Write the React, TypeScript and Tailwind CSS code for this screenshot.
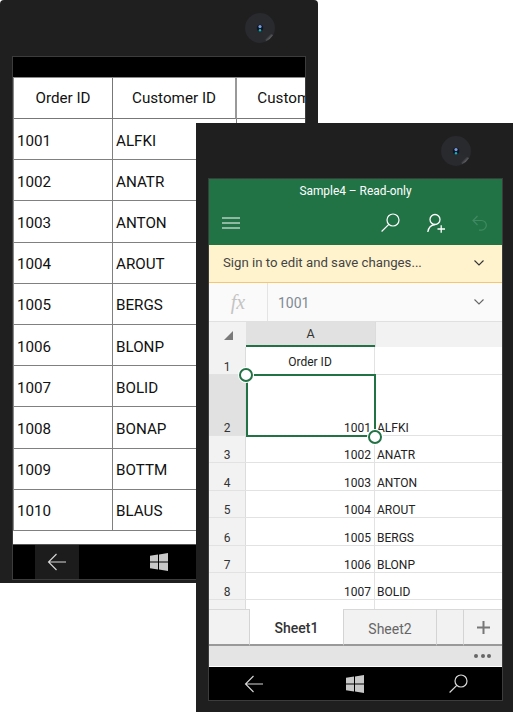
const FONT = "font-['Roboto','Noto_Sans',sans-serif]";

function Camera() {
  return (
    <svg width="30" height="30" viewBox="0 0 30 30" className="absolute left-[245px] top-[13px]">
      <defs>
        <linearGradient id="cam" x1="0.5" y1="0.5" x2="0.9" y2="0.9">
          <stop offset="0.3" stopColor="#2a2b2f" />
          <stop offset="1" stopColor="#8a8a8c" />
        </linearGradient>
      </defs>
      <circle cx="15" cy="15" r="15" fill="#292a2e" />
      <path d="M15 15 L28 22 A15 15 0 0 1 21 28 Z" fill="url(#cam)" />
      <circle cx="15" cy="15" r="3.2" fill="#0d1526" />
      <circle cx="15" cy="13.6" r="1.6" fill="#7a9bdc" />
      <circle cx="15" cy="17.2" r="1.2" fill="#14b0b8" />
    </svg>
  );
}

function BackIcon() {
  return (
    <svg width="20" height="18" viewBox="0 0 20 18" fill="none" stroke="#d8d8d8" strokeWidth="1.1">
      <path d="M19 9H1.5M9.5 1L1.5 9l8 8" />
    </svg>
  );
}

function WinIcon() {
  return (
    <svg width="18" height="18" viewBox="0 0 18 18" fill="#c8c8c8">
      <path d="M0 2.8L8 1.6V8.4H0ZM9 1.4L18 0V8.4H9ZM0 9.6H8V16.4L0 15.2ZM9 9.6H18V18L9 16.6Z" />
    </svg>
  );
}

function SearchIcon({ color = "#d8d8d8" }: { color?: string }) {
  return (
    <svg width="19" height="19" viewBox="0 0 19 19" fill="none" stroke={color} strokeWidth="1.2">
      <circle cx="12" cy="7" r="6" />
      <path d="M7.8 11.3L0.6 18.5" />
    </svg>
  );
}

function Chevron({ color }: { color: string }) {
  return (
    <svg width="10" height="6" viewBox="0 0 10 6" fill="none" stroke={color} strokeWidth="1.1">
      <path d="M0.5 0.5L5 5L9.5 0.5" />
    </svg>
  );
}

const orders = [
  ["1001", "ALFKI"],
  ["1002", "ANATR"],
  ["1003", "ANTON"],
  ["1004", "AROUT"],
  ["1005", "BERGS"],
  ["1006", "BLONP"],
  ["1007", "BOLID"],
  ["1008", "BONAP"],
  ["1009", "BOTTM"],
  ["1010", "BLAUS"],
];

function BackPhone() {
  return (
    <div className="absolute left-0 top-0 h-[583px] w-[318px] rounded-t-[4px] bg-[#1f1f1f] pl-3 pt-[56px]">
      <Camera />
      <div className="flex h-[524px] w-[294px] flex-col border border-[#3c3c3c] bg-white">
        <div className="h-5 shrink-0 bg-black" />
        <div className="flex-1 overflow-hidden bg-white">
          <div className="grid w-[372px] grid-cols-[99px_124px_149px] border-t border-l border-[#8a8a8a] text-[15.2px] text-[#111]">
            <div className="flex h-[41px] items-center justify-center border-r border-b border-[#777]">Order ID</div>
            <div className="flex h-[41px] items-center justify-center border-r-2 border-b border-r-[#999] border-b-[#777]">Customer ID</div>
            <div className="flex h-[41px] items-center justify-center border-b border-[#777] pl-[2px]">Customer Name</div>
            {orders.map(([id, cust]) => (
              <div key={id} className="contents">
                <div className="flex h-[41.2px] items-center border-r border-b border-[#808080] pt-[4px] pl-[3px]">{id}</div>
                <div className="flex h-[41.2px] items-center border-r border-b border-[#808080] pt-[4px] pl-[3px]">{cust}</div>
                <div className="h-[41.2px] border-b border-[#808080]" />
              </div>
            ))}
          </div>
        </div>
        <div className="flex h-[35px] shrink-0 border-t border-[#555] bg-black">
          <div className="ml-[22px] flex w-[44px] items-center justify-center bg-[#1c1c1c]">
            <BackIcon />
          </div>
          <div className="ml-[71px] flex items-center">
            <WinIcon />
          </div>
        </div>
      </div>
    </div>
  );
}

const rows = [
  { n: 3, id: "1002", c: "ANATR" },
  { n: 4, id: "1003", c: "ANTON" },
  { n: 5, id: "1004", c: "AROUT" },
  { n: 6, id: "1005", c: "BERGS" },
  { n: 7, id: "1006", c: "BLONP" },
  { n: 8, id: "1007", c: "BOLID" },
];

function SheetRow({ n, id, c, highlight, h }: { n: string | number; id?: string; c?: string; highlight?: boolean; h: string }) {
  return (
    <div className={`flex ${h} border-b border-[#e2e2e2] text-[12px] leading-[14px] text-[#222]`}>
      <div className={`flex w-[37px] items-end justify-center border-r border-[#dcdcdc] text-[#333] ${highlight ? "bg-[#e1e1e1]" : "bg-[#f2f2f2]"}`}>{n}</div>
      <div className="flex w-[129px] items-end justify-end border-r border-[#e2e2e2] pr-[3px]">{id}</div>
      <div className="flex flex-1 items-end pl-[2px]">{c}</div>
    </div>
  );
}

function FrontPhone() {
  return (
    <div className="absolute left-[196px] top-[123px] h-[589px] w-[317px] bg-[#1f1f1f] pl-3 pt-[55px]">
      <Camera />
      <div className="flex h-[523px] w-[295px] flex-col border border-[#3c3c3c] bg-white">
        <div className="h-[66px] shrink-0 bg-[#217346] text-white">
          <div className="pt-[2px] text-center text-[11.9px] leading-5">Sample4 – Read-only</div>
          <div className="flex h-[40px] items-center pl-[13px] pr-[15px] pt-[3px]">
            <svg width="18" height="12" viewBox="0 0 18 12" stroke="#fff" strokeWidth="1">
              <path d="M0 1h18M0 6h18M0 11h18" />
            </svg>
            <div className="ml-auto mr-[27px] flex">
              <SearchIcon color="#ffffff" />
            </div>
            <svg width="18" height="20" viewBox="0 0 18 20" fill="none" stroke="#fff" strokeWidth="1.3" className="mr-[27px]">
              <circle cx="8" cy="6.5" r="5" />
              <path d="M0.8 19C1.5 14.5 4 12 8 11.5M10.5 16h7.5M14.2 12.2v7.6" />
            </svg>
            <svg width="15" height="16" viewBox="0 0 15 16" fill="none" stroke="#3f8a61" strokeWidth="1.2">
              <path d="M5.5 1L1 5.5l4.5 4.5M1 5.5h8.5a4.8 4.8 0 0 1 0 9.6H7" />
            </svg>
          </div>
        </div>
        <div className="flex h-[38px] shrink-0 items-center border-b border-[#f6c56f] bg-[#fff3cd] pr-[18px] pb-[1px] pl-[14px] text-[13.2px] text-[#444]">
          <span>Sign in to edit and save changes...</span>
          <span className="ml-auto flex">
            <Chevron color="#333" />
          </span>
        </div>
        <div className="flex h-[39px] shrink-0 border-b border-[#e0e0e0] bg-[#fafafa]">
          <div className="flex w-[59px] items-center justify-center border-r border-[#e4e4e4] font-['Liberation_Serif',serif] text-[20px] text-[#c4c4c4] italic">fx</div>
          <div className="flex flex-1 items-center pl-[10px] pr-[18px] text-[14px] text-[#808a94]">
            <span className="pt-[2px]">1001</span>
            <span className="ml-auto flex">
              <Chevron color="#666" />
            </span>
          </div>
        </div>
        <div className="relative min-h-0 flex-1 overflow-hidden">
          <div className="flex h-[25px] bg-[#f2f2f2] text-[12.5px] text-[#333]">
            <div className="flex w-[37px] items-center justify-center">
              <svg width="10" height="10" viewBox="0 0 10 10" fill="#7a7a7a">
                <path d="M10 1V10H1Z" />
              </svg>
            </div>
            <div className="flex w-[129px] items-center justify-center border-b-2 border-[#217346] bg-[#e1e1e1] pt-[1px]">A</div>
            <div className="flex-1 border-l border-[#dcdcdc]" />
          </div>
          <div className="flex h-[28px] border-b border-[#e2e2e2] text-[12px] text-[#222]">
            <div className="flex w-[37px] items-end justify-center border-r border-[#dcdcdc] bg-[#f2f2f2] leading-[14px] text-[#333]">1</div>
            <div className="w-[129px] border-r border-[#e2e2e2] pt-[6px] text-center">Order ID</div>
          </div>
          <SheetRow n={2} id="1001" c="ALFKI" highlight h="h-[61px]" />
          {rows.map((r) => (
            <SheetRow key={r.n} n={r.n} id={r.id} c={r.c} h="h-[27.4px]" />
          ))}
          <div className="flex h-[9px]">
            <div className="w-[37px] border-r border-[#dcdcdc] bg-[#f2f2f2]" />
            <div className="w-[129px] border-r border-[#e2e2e2]" />
          </div>
          <div className="absolute left-[37px] top-[52px] h-[63px] w-[130px] border-2 border-[#217346]" />
          <div className="absolute left-[30px] top-[46px] h-[14px] w-[14px] rounded-full border-2 border-[#217346] bg-white ring-1 ring-white" />
          <div className="absolute left-[159px] top-[108px] h-[14px] w-[14px] rounded-full border-2 border-[#217346] bg-white ring-1 ring-white" />
        </div>
        <div className="flex h-[37px] shrink-0 bg-[#f2f2f2] text-[14px]">
          <div className="w-[41px] border-t border-r border-b-2 border-t-[#d8d8d8] border-r-[#d4d4d4] border-b-[#999]" />
          <div className="flex w-[93px] items-center justify-center border-b-2 border-b-[#999] bg-white pt-[3px] font-medium text-[#333]">Sheet1</div>
          <div className="flex w-[94px] items-center justify-center border-t border-r border-b-2 border-l border-t-[#d8d8d8] border-b-[#999] border-x-[#d4d4d4] pt-[4px] text-[#666]">Sheet2</div>
          <div className="w-[27px] border-t border-r border-b-2 border-t-[#d8d8d8] border-r-[#d4d4d4] border-b-[#999]" />
          <div className="flex flex-1 items-center justify-center border-t border-b-2 border-t-[#d8d8d8] border-b-[#999]">
            <svg width="13" height="13" viewBox="0 0 13 13" stroke="#777" strokeWidth="2">
              <path d="M0 6.5h13M6.5 0v13" />
            </svg>
          </div>
        </div>
        <div className="flex h-[21px] shrink-0 items-center justify-end gap-[2.5px] border-b border-white bg-[#e4e4e4] pr-[11px]">
          <i className="h-1 w-1 rounded-full bg-[#666]" />
          <i className="h-1 w-1 rounded-full bg-[#666]" />
          <i className="h-1 w-1 rounded-full bg-[#666]" />
        </div>
        <div className="flex h-[33px] shrink-0 items-center bg-black">
          <div className="ml-[35px] flex">
            <BackIcon />
          </div>
          <div className="ml-[82px] flex">
            <WinIcon />
          </div>
          <div className="ml-auto mr-[34px] flex">
            <SearchIcon />
          </div>
        </div>
      </div>
    </div>
  );
}

export default function App() {
  return (
    <div className={`relative h-[712px] w-[513px] overflow-hidden bg-white ${FONT}`}>
      <BackPhone />
      <FrontPhone />
    </div>
  );
}
